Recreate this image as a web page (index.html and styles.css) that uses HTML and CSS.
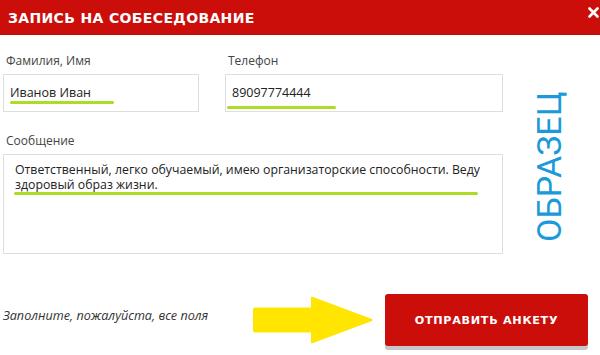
FILE: index.html
```html
<!DOCTYPE html>
<html lang="ru">
<head>
<meta charset="utf-8">
<title>Запись на собеседование</title>
<link rel="stylesheet" href="styles.css">
</head>
<body>
<div class="modal">
  <header class="head">
    <h1 class="title">ЗАПИСЬ НА СОБЕСЕДОВАНИЕ</h1>
    <svg class="close" width="11" height="11" viewBox="0 0 11 11"><path d="M1.5 1.5 L9.5 9.5 M9.5 1.5 L1.5 9.5" stroke="#fff" stroke-width="2.6" stroke-linecap="round"/></svg>
  </header>
  <div class="main">
    <div class="form">
      <div class="row">
        <div class="field name">
          <div class="label">Фамилия, Имя</div>
          <div class="box input">Иванов Иван<span class="mark mark-name"></span></div>
        </div>
        <div class="field phone">
          <div class="label">Телефон</div>
          <div class="box input">89097774444<span class="mark mark-phone"></span></div>
        </div>
      </div>
      <div class="label label-msg">Сообщение</div>
      <div class="box area">Ответственный, легко обучаемый, имею организаторские способности. Веду здоровый образ жизни.<span class="mark mark-msg"></span></div>
    </div>
    <div class="stamp"><span class="stamp-text">ОБРАЗЕЦ</span></div>
  </div>
  <footer class="foot">
    <div class="note">Заполните, пожалуйста, все поля</div>
    <svg class="arrow" width="120" height="48" viewBox="0 0 120 48"><path d="M2 11.5 Q0 11.5 0 13.5 V34.5 Q0 36.5 2 36.5 H58 V46 Q58 48 60 47 L119 25 Q120 24 119 23 L60 1 Q58 0 58 2 V11.5 Z" fill="#ffe500"/></svg>
    <button class="send">ОТПРАВИТЬ АНКЕТУ</button>
  </footer>
</div>
</body>
</html>
```

FILE: styles.css
```css
* { box-sizing: border-box; }
html, body { margin: 0; padding: 0; background: #fff; }
body { width: 600px; height: 355px; overflow: hidden; font-family: "Open Sans", "Noto Sans", sans-serif; color: #333; }

.head {
  height: 35px;
  background: #cc0e0b;
  border-bottom: 1px solid #b80b08;
  display: flex;
  align-items: center;
  justify-content: space-between;
  padding: 0 1px 0 8px;
}
.title {
  margin: 0;
  font-family: "DejaVu Sans", "Liberation Sans", sans-serif;
  font-weight: 700;
  font-size: 14px;
  letter-spacing: 0.35px;
  color: #fff;
  line-height: 1;
  padding-top: 1px;
}
.close { margin-top: -9px; }

.main { display: flex; padding-left: 3px; }
.form { width: 500px; }
.row { display: flex; gap: 26px; padding-top: 18px; }
.field.name { width: 196px; }
.field.phone { width: 278px; }
.label { font-size: 12px; line-height: 16px; color: #444; padding-left: 3px; margin-bottom: 5px; }
.label-msg { margin-top: 21px; margin-bottom: 5px; }

.box {
  position: relative;
  border: 1px solid #dedede;
  background: #fff;
  color: #222;
  font-size: 12.5px;
}
.input { height: 38px; line-height: 36px; padding-left: 6px; }
.area { height: 100px; padding: 7px 10px 0 11px; line-height: 15px; font-size: 12.3px; }

.mark {
  position: absolute;
  height: 3px;
  border-radius: 2px;
  background: #acdc26;
}
.mark-name { left: 6px; width: 104px; top: 26px; }
.mark-phone { left: 1px; width: 109px; top: 31px; }
.mark-msg { left: 10px; width: 464px; top: 37px; }

.stamp { flex: 1; display: flex; justify-content: center; padding-top: 53px; padding-right: 6px; }
.stamp-text {
  writing-mode: vertical-rl;
  transform: rotate(180deg);
  font-family: Roboto, "Liberation Sans", sans-serif;
  font-weight: 400;
  font-size: 34px;
  color: #1a9ad8;
  line-height: 1;
  height: 154px;
  text-align: left;
}

.foot {
  display: flex;
  align-items: center;
  margin-top: 40px;
  padding-left: 3px;
}
.note { font-style: italic; font-size: 12.6px; color: #333; width: 250px; margin-top: -10px; }
.arrow { display: block; margin-top: 0; }
.send {
  margin-left: 12px;
  width: 203px;
  height: 52px;
  border: 0;
  border-radius: 3px;
  background: #cc0e0b;
  box-shadow: 0 4px 0 #c7c7c7;
  color: #fff;
  font-family: "DejaVu Sans", "Liberation Sans", sans-serif;
  font-weight: 700;
  font-size: 11.2px;
  letter-spacing: 0.7px;
}
```
